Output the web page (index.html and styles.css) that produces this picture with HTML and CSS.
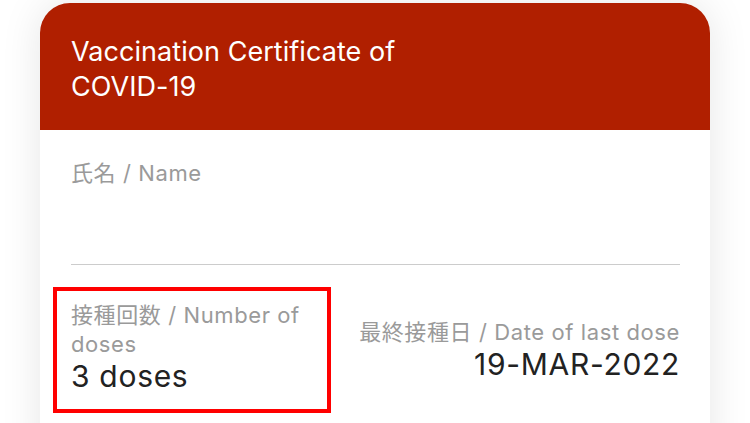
FILE: index.html
```html
<!DOCTYPE html>
<html>
<head>
<meta charset="utf-8">
<link rel="stylesheet" href="styles.css">
</head>
<body>
<div class="card">
  <div class="card-header">
    <div class="title">Vaccination Certificate of<br>COVID-19</div>
  </div>
  <div class="card-body">
    <div class="field-name">
      <div class="label">氏名 / Name</div>
    </div>
    <div class="row">
      <div class="cell highlight">
        <div class="label">接種回数 / Number of doses</div>
        <div class="value">3 doses</div>
      </div>
      <div class="cell right">
        <div class="label">最終接種日 / Date of last dose</div>
        <div class="value">19-MAR-2022</div>
      </div>
    </div>
  </div>
</div>
</body>
</html>
```
FILE: styles.css
```css
html, body {
  margin: 0;
  padding: 0;
  background: #ffffff;
  overflow: hidden;
}
body {
  width: 750px;
  height: 423px;
  font-family: "Inter", "Noto Sans CJK JP", sans-serif;
}
.card {
  margin: 3px 0 0 40px;
  width: 670px;
  height: 460px;
  border-radius: 30px 30px 0 0;
  background: #ffffff;
  box-shadow: 0 0 40px rgba(0, 0, 0, 0.10);
  overflow: hidden;
}
.card-header {
  background: #b01f00;
  height: 127px;
  box-sizing: border-box;
  padding: 31px 31px 0 31px;
}
.title {
  color: #ffffff;
  font-size: 27px;
  line-height: 35px;
  letter-spacing: 0.05px;
  font-family: "Inter", sans-serif;
}
.card-body {
  padding: 0 30px 0 31px;
}
.field-name {
  height: 135px;
  box-sizing: border-box;
  padding-top: 29px;
  border-bottom: 1px solid #cccccc;
}
.label {
  color: #9a9a9a;
  font-size: 22px;
  line-height: 29px;
  letter-spacing: 0.6px;
  font-family: "Inter", "Noto Sans CJK JP", sans-serif;
}
.row {
  display: flex;
  justify-content: space-between;
  align-items: center;
  margin-top: 22px;
}
.cell.highlight {
  margin-left: -18px;
  width: 278px;
  box-sizing: border-box;
  border: 4px solid #ff0000;
  padding: 10px 10px 15px 14px;
}
.value {
  color: #222222;
  font-size: 30px;
  line-height: 35px;
  letter-spacing: 0.7px;
  font-family: "Inter", sans-serif;
}
.cell.right {
  text-align: right;
}
```
